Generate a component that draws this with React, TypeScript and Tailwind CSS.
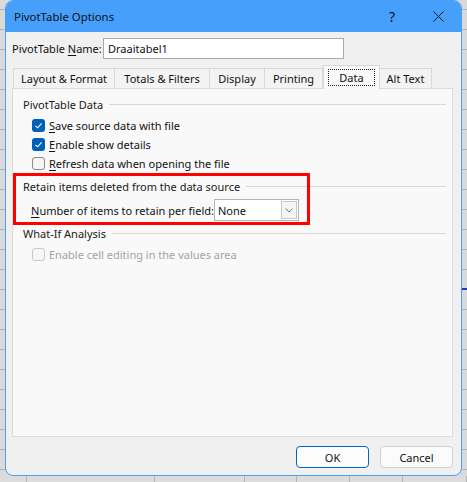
import React from "react";

const font = { fontFamily: '"Noto Sans", "Open Sans", sans-serif' };

function Check({ checked, disabled }: { checked?: boolean; disabled?: boolean }) {
  if (checked) {
    return (
      <span className="flex h-[13px] w-[13px] shrink-0 items-center justify-center rounded-[3px] bg-[#005fb8]">
        <svg width="9" height="9" viewBox="0 0 9 9">
          <path d="M1.5 4.8 L3.6 6.8 L7.6 2.3" fill="none" stroke="white" strokeWidth="1.1" />
        </svg>
      </span>
    );
  }
  return (
    <span
      className={
        "h-[13px] w-[13px] shrink-0 rounded-[3px] border " +
        (disabled ? "border-[#c9c9c9] bg-[#f7f7f7]" : "border-[#8a8a8a] bg-[#f5f5f5]")
      }
    />
  );
}

function Row({ checked, disabled, u, rest }: { checked?: boolean; disabled?: boolean; u?: string; rest: string }) {
  return (
    <div className="flex h-[19px] items-center pl-[19px]">
      <Check checked={checked} disabled={disabled} />
      <span className={"ml-[4px] whitespace-nowrap " + (disabled ? "text-[#a3a3a3]" : "text-[#111]")}>
        {u ? <span className="underline underline-offset-2">{u}</span> : null}
        {rest}
      </span>
    </div>
  );
}

function Section({ title }: { title: string }) {
  return (
    <div className="flex h-[19px] items-center pl-[10px] pr-[6px]">
      <span className="whitespace-nowrap text-[#1a1a1a]">{title}</span>
      <div className="ml-[6px] h-px flex-1 bg-[#d8d8d8]" />
    </div>
  );
}

const tabs = [
  { t: "Layout & Format", w: 102 },
  { t: "Totals & Filters", w: 95 },
  { t: "Display", w: 55 },
  { t: "Printing", w: 58 },
  { t: "Data", w: 57, sel: true },
  { t: "Alt Text", w: 52 },
];

const colW = [27, 128, 90, 52, 53, 53, 64];

export default function App() {
  return (
    <div
      className="flex h-[482px] w-[467px] flex-col overflow-hidden bg-[#d9d9d9] text-[11px] leading-none"
      style={font}
    >
      <div className="relative flex h-[476px] bg-[repeating-linear-gradient(180deg,#dadada_0px,#dadada_9px,#b4b4b4_9px,#b4b4b4_10px,#dadada_10px,#dadada_20px)]">
        <div className="w-[5px] shrink-0" />
        <div className="flex h-[476px] w-[457px] flex-col overflow-hidden rounded-[8px] border border-[#4b9ff4] bg-[#f0f0f0]">
          {/* title bar */}
          <div className="flex h-[31px] shrink-0 items-center bg-[#46a0fb] pl-[8px] text-[#111]">
            <span className="whitespace-nowrap text-[11.4px]">PivotTable Options</span>
            <span className="ml-auto mr-[38px] text-[14px]">?</span>
            <svg width="11" height="11" viewBox="0 0 11 11" className="mr-[17px]">
              <path d="M0.5 0.5 L10.5 10.5 M10.5 0.5 L0.5 10.5" stroke="#111" strokeWidth="1" />
            </svg>
          </div>
          {/* name row */}
          <div className="mt-[6px] flex h-[21px] items-center pl-[6px]">
            <span className="w-[91px] whitespace-nowrap text-[#111]">
              PivotTable <span className="underline underline-offset-2">N</span>ame:
            </span>
            <div className="flex h-[21px] w-[241px] items-center border border-[#a9a9a9] bg-white pl-[4px] text-[#111]">
              Draaitabel1
            </div>
          </div>
          {/* tabs */}
          <div className="mt-[6px] flex h-[23px] items-end pl-[7px]">
            {tabs.map((tab) =>
              tab.sel ? (
                <div
                  key={tab.t}
                  className="relative z-10 -mb-px flex h-[24px] shrink-0 items-center justify-center border border-b-0 border-[#d9d9d9] bg-[#f9f9f9]"
                  style={{ width: tab.w }}
                >
                  <span className="flex h-[17px] items-center whitespace-nowrap border border-dotted border-[#222] px-[10px] text-[#111]">
                    {tab.t}
                  </span>
                </div>
              ) : (
                <div
                  key={tab.t}
                  className="flex h-[20px] shrink-0 items-center justify-center whitespace-nowrap border border-b-0 border-l-0 border-[#d9d9d9] bg-[#f3f3f3] text-[#111] first:border-l"
                  style={{ width: tab.w }}
                >
                  {tab.t}
                </div>
              )
            )}
          </div>
          {/* panel */}
          <div className="relative ml-[6px] flex h-[349px] w-[441px] flex-col border border-[#dcdcdc] bg-[#f9f9f9] pt-[6px]">
            <Section title="PivotTable Data" />
            <div className="mt-[2px]" />
            <Row checked u="S" rest="ave source data with file" />
            <Row checked u="E" rest="nable show details" />
            <Row u="R" rest="efresh data when opening the file" />
            <div className="mt-[4px]" />
            <Section title="Retain items deleted from the data source" />
            <div className="mt-[3px] flex h-[22px] items-center pl-[18px]">
              <span className="whitespace-nowrap text-[#111]">
                <span className="underline underline-offset-2">N</span>umber of items to retain per field:
              </span>
              <div className="ml-auto mr-[154px] flex h-[22px] w-[85px] shrink-0 items-stretch border border-[#b4b4b4] bg-white">
                <span className="flex flex-1 items-center pl-[3px] text-[#111]">None</span>
                <span className="my-[1px] mr-[1px] flex w-[16px] items-center justify-center border border-[#c8c8c8] bg-[#f5f5f5]">
                  <svg width="8" height="5" viewBox="0 0 8 5">
                    <path d="M0.5 0.5 L4 4 L7.5 0.5" fill="none" stroke="#777" strokeWidth="1" />
                  </svg>
                </span>
              </div>
            </div>
            <div className="mt-[3px]" />
            <Section title="What-If Analysis" />
            <div className="mt-[2px]" />
            <Row disabled rest="Enable cell editing in the values area" />
            {/* red annotation */}
            <div className="pointer-events-none absolute left-[0px] top-[84px] h-[52px] w-[297px] border-[3px] border-[#ff0000]" />
          </div>
          {/* buttons */}
          <div className="mt-[9px] flex justify-end gap-[11px] pr-[8px]">
            <button className="h-[22px] w-[73px] rounded-[4px] border border-[#0067c0] bg-[#fdfdfd] text-[#111]">
              OK
            </button>
            <button className="h-[22px] w-[73px] rounded-[4px] border border-[#d0d0d0] bg-[#fbfbfb] text-[#111]">
              Cancel
            </button>
          </div>
        </div>
        <div className="relative w-[5px] shrink-0">
          <div className="absolute left-0 top-[288px] h-[2px] w-[5px] bg-[#1e3cb4]" />
        </div>
      </div>
      <div className="flex h-[6px] bg-[#dcdcdc]">
        {colW.map((w, i) => (
          <div key={i} className="h-full shrink-0 border-r border-[#b4b4b4]" style={{ width: w }} />
        ))}
      </div>
    </div>
  );
}
